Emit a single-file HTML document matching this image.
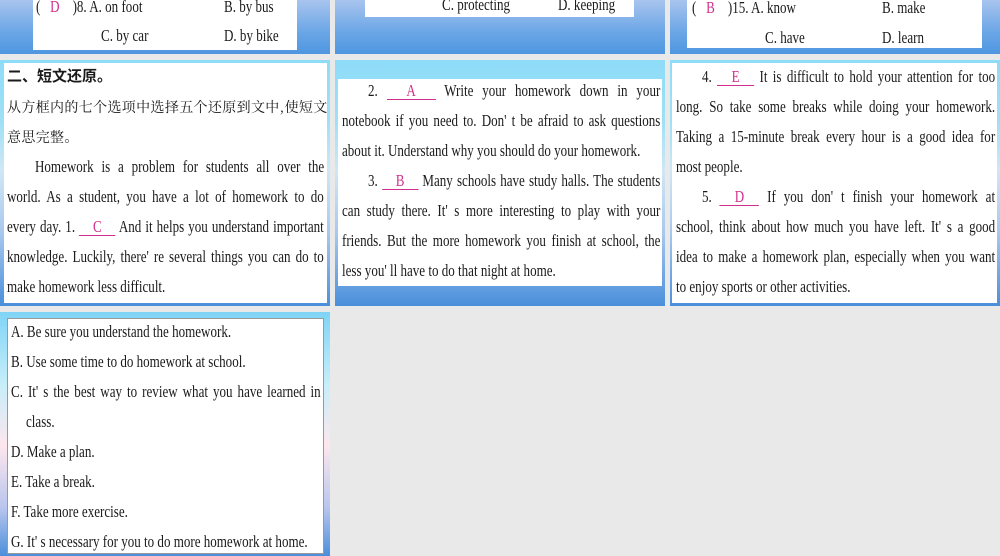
<!DOCTYPE html>
<html><head><meta charset="utf-8"><style>
*{margin:0;padding:0;box-sizing:border-box}
body{width:1000px;height:556px;background:#e9e9e9;position:relative;overflow:hidden;font-family:"Liberation Serif","Noto Serif CJK SC",serif;color:#1a1a1a}
.s{position:absolute;overflow:hidden}
.g1{background:linear-gradient(#a8c4ee,#6aa6e6 60%,#4f96e0)}
.g2{background:linear-gradient(#8edcf8 0%,#9ee0f6 25%,#cfe7f5 45%,#a8c8ee 70%,#4a8fdb 100%)}
.g3{background:linear-gradient(#7ed4f6 0%,#c8eefa 30%,#fde6ee 55%,#b9c6ee 80%,#4a8fdb 100%)}
.w{position:absolute;background:#fff}
.l{position:absolute;white-space:nowrap;font-size:16.5px;line-height:20px;transform:scaleX(.79);transform-origin:0 0}
.j{text-align:justify;text-align-last:justify}
.a{color:#d0308a;display:inline-block;border-bottom:1px solid #d0308a;text-align:center;text-align-last:center;line-height:16px}
.c{position:absolute;white-space:nowrap;font-size:14px;letter-spacing:0.35px;line-height:20px;font-family:"Noto Serif CJK SC",serif}
</style></head><body>
<!-- row1 -->
<div class="s g1" style="left:0;top:0;width:330px;height:54px"></div>
<div class="w" style="left:33px;top:0;width:264px;height:50px"></div>
<div class="l" style="left:36px;top:-3px">( &nbsp;&nbsp;<span style="color:#d0308a">D</span>&nbsp;&nbsp;&nbsp; )8. A. on foot</div>
<div class="l" style="left:224px;top:-3px">B. by bus</div>
<div class="l" style="left:101px;top:26px">C. by car</div>
<div class="l" style="left:224px;top:26px">D. by bike</div>

<div class="s g1" style="left:335px;top:0;width:330px;height:54px"></div>
<div class="w" style="left:365px;top:0;width:269px;height:17px"></div>
<div class="l" style="left:442px;top:-5px">C. protecting</div>
<div class="l" style="left:558px;top:-5px">D. keeping</div>

<div class="s g1" style="left:670px;top:0;width:330px;height:54px"></div>
<div class="w" style="left:687px;top:0;width:295px;height:48px"></div>
<div class="l" style="left:692px;top:-2px">( &nbsp;&nbsp;<span style="color:#d0308a">B</span>&nbsp;&nbsp;&nbsp; )15. A. know</div>
<div class="l" style="left:882px;top:-2px">B. make</div>
<div class="l" style="left:765px;top:28px">C. have</div>
<div class="l" style="left:882px;top:28px">D. learn</div>

<!-- row2 -->
<div class="s g2" style="left:0;top:60px;width:330px;height:246px"></div>
<div class="w" style="left:4px;top:63px;width:323px;height:240px"></div>
<div class="c" style="left:7px;top:66px;font-size:15px;letter-spacing:0;font-family:'Noto Sans CJK SC',sans-serif;font-weight:bold">二、短文还原。</div>
<div class="c" style="left:7px;top:97px">从方框内的七个选项中选择五个还原到文中,使短文</div>
<div class="c" style="left:7px;top:127px">意思完整。</div>
<div class="l j" style="left:35px;top:157px;width:366px">Homework is a problem for students all over the</div>
<div class="l j" style="left:7px;top:187px;width:401px">world. As a student, you have a lot of homework to do</div>
<div class="l j" style="left:7px;top:217px;width:401px">every day. 1. <span class="a" style="width:46px">C</span> And it helps you understand important</div>
<div class="l j" style="left:7px;top:247px;width:401px">knowledge. Luckily, there' re several things you can do to</div>
<div class="l" style="left:7px;top:277px">make homework less difficult.</div>

<div class="s g2" style="left:335px;top:60px;width:330px;height:246px"></div>
<div class="w" style="left:338px;top:79px;width:324px;height:207px"></div>
<div class="l j" style="left:368px;top:81px;width:370px">2. <span class="a" style="width:62px">A</span> Write your homework down in your</div>
<div class="l j" style="left:342px;top:111px;width:403px">notebook if you need to. Don' t be afraid to ask questions</div>
<div class="l" style="left:342px;top:141px">about it. Understand why you should do your homework.</div>
<div class="l j" style="left:368px;top:171px;width:370px">3. <span class="a" style="width:46px">B</span> Many schools have study halls. The students</div>
<div class="l j" style="left:342px;top:201px;width:403px">can study there. It' s more interesting to play with your</div>
<div class="l j" style="left:342px;top:231px;width:403px">friends. But the more homework you finish at school, the</div>
<div class="l" style="left:342px;top:261px">less you' ll have to do that night at home.</div>

<div class="s g2" style="left:670px;top:60px;width:330px;height:246px"></div>
<div class="w" style="left:672px;top:63px;width:325px;height:240px"></div>
<div class="l j" style="left:702px;top:67px;width:371px">4. <span class="a" style="width:47px">E</span> It is difficult to hold your attention for too</div>
<div class="l j" style="left:676px;top:97px;width:404px">long. So take some breaks while doing your homework.</div>
<div class="l j" style="left:676px;top:127px;width:404px">Taking a 15-minute break every hour is a good idea for</div>
<div class="l" style="left:676px;top:157px">most people.</div>
<div class="l j" style="left:702px;top:187px;width:371px">5. <span class="a" style="width:50px">D</span> If you don' t finish your homework at</div>
<div class="l j" style="left:676px;top:217px;width:404px">school, think about how much you have left. It' s a good</div>
<div class="l j" style="left:676px;top:247px;width:404px">idea to make a homework plan, especially when you want</div>
<div class="l" style="left:676px;top:277px">to enjoy sports or other activities.</div>

<!-- row3 -->
<div class="s g3" style="left:0;top:312px;width:330px;height:244px"></div>
<div class="w" style="left:7px;top:318px;width:317px;height:236px;border:1px solid #999"></div>
<div class="l" style="left:11px;top:322px">A. Be sure you understand the homework.</div>
<div class="l" style="left:11px;top:352px">B. Use some time to do homework at school.</div>
<div class="l j" style="left:11px;top:382px;width:392px">C. It' s the best way to review what you have learned in</div>
<div class="l" style="left:26px;top:412px">class.</div>
<div class="l" style="left:11px;top:442px">D. Make a plan.</div>
<div class="l" style="left:11px;top:472px">E. Take a break.</div>
<div class="l" style="left:11px;top:502px">F. Take more exercise.</div>
<div class="l" style="left:11px;top:532px">G. It' s necessary for you to do more homework at home.</div>
</body></html>
